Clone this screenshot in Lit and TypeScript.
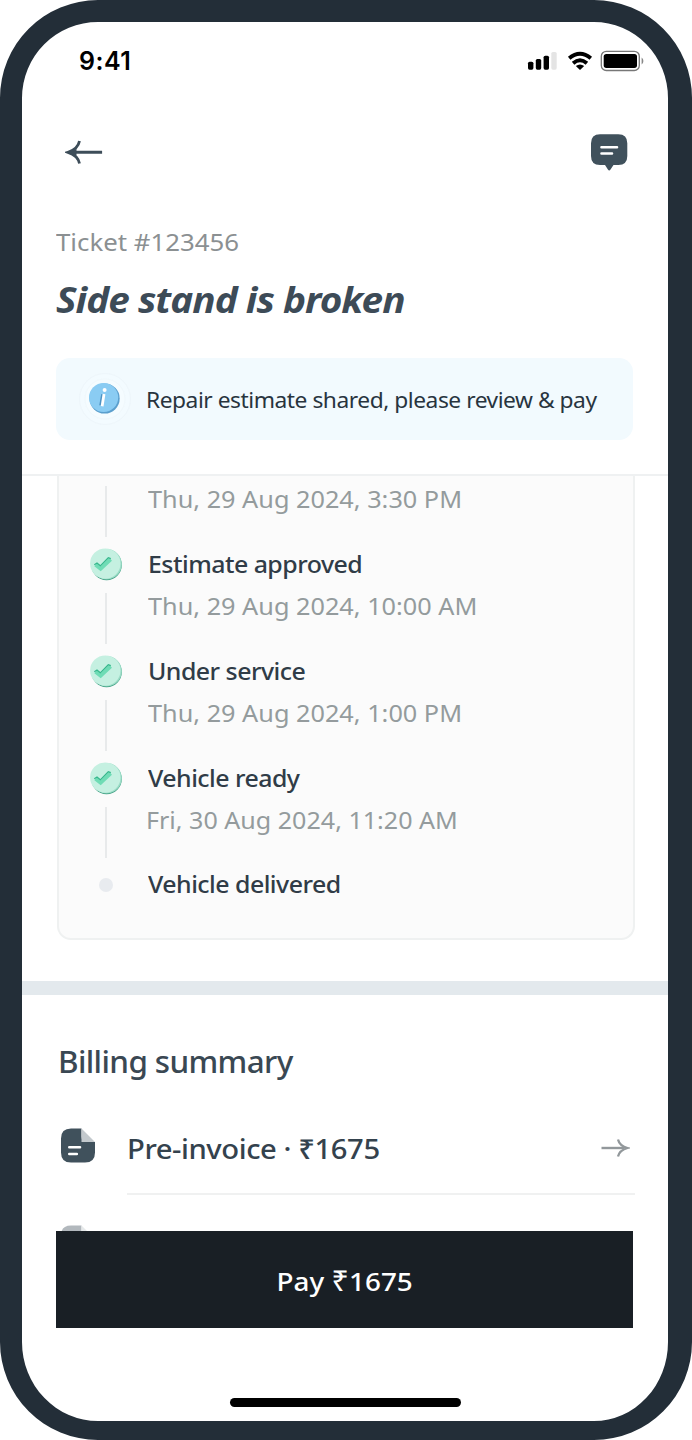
import { LitElement, html, css, svg } from "lit";
import { customElement, property } from "lit/decorators.js";

@customElement("status-bar")
class StatusBar extends LitElement {
  static styles = css`
    :host { display: flex; height: 78px; padding: 0 23px 0 57px; align-items: center; justify-content: space-between; box-sizing: border-box; }
    .time { font: 600 25px/30px Inter, sans-serif; color: #000; letter-spacing: 0.5px; }
    svg { display: block; }
  `;
  render() {
    return html`
      <span class="time">9:41</span>
      <svg width="118" height="24" viewBox="527 49 118 24">
        <rect x="528" y="61.7" width="5.4" height="8" rx="1.6" />
        <rect x="535.8" y="59" width="5.4" height="10.7" rx="1.6" />
        <rect x="543.6" y="55.7" width="5.4" height="14" rx="1.6" />
        <rect x="551.3" y="52" width="5.4" height="17.7" rx="1.6" fill="#e4e4e4" />
        <g fill="none" stroke="#000" stroke-width="3.9">
          <path d="M569.2 58.2 Q580 49.4 590.8 58.2" />
          <path d="M573.1 63.2 Q580 57.2 586.9 63.2" />
        </g>
        <path d="M575.8 66.1 Q580 62.9 584.2 66.1 L580 70 Z" />
        <rect x="601.3" y="51.3" width="38" height="19.2" rx="5" fill="none" stroke="#777" stroke-width="1.3" />
        <rect x="603.7" y="53.9" width="33.3" height="14" rx="2.6" />
        <path d="M641.6 57.6 Q643.4 58.8 643.4 61 Q643.4 63.2 641.6 64.4Z" fill="#888" />
      </svg>
    `;
  }
}

const check = svg`
  <circle cx="16.6" cy="17" r="15.2" fill="#35987b" />
  <circle cx="16.6" cy="16.3" r="15.2" fill="#9adcc6" />
  <circle cx="15.3" cy="15.6" r="15.2" fill="#c5f0e1" />
  <path d="M5.6 16.6 L10.6 20.6 L20.6 11.2" fill="none" stroke="#6fdcb5" stroke-width="4" />
  <path d="M4.3 16.8 L7 15 L10.3 17.8 L18.3 9.8 L20.8 10.6" fill="none" stroke="#35b78c" stroke-width="1.2" />`;

@customElement("timeline-step")
class TimelineStep extends LitElement {
  @property() label = "";
  @property() date = "";
  @property() kind = "done";
  static styles = css`
    :host { display: grid; grid-template-columns: 32px 1fr; column-gap: 26px; height: 106.8px; color: #303c47; }
    :host([kind="partial"]) { height: 72px; }
    :host([kind="pending"]) { height: 66px; }
    .rail { display: flex; flex-direction: column; align-items: center; gap: 12px; }
    .partial { padding-top: 10px; }
    .icon { display: block; }
    .line { width: 2px; height: 51px; background: #e8eaeb; }
    .dot { width: 14px; height: 14px; border-radius: 50%; background: #e8ebef; margin-top: 10px; }
    .text { display: flex; flex-direction: column; align-items: flex-start; white-space: nowrap; }
    .label, .date { transform-origin: left center; }
    .label { font-weight: 500; font-size: 24px; line-height: 32px; letter-spacing: -0.5px; transform: scaleX(1.037); }
    .date { font-size: 24px; line-height: 30px; margin-top: 11px; color: #949b9d; transform: scaleX(1.053); }
    .friday { margin-left: -2px; transform: scaleX(1.045); }
    .only { margin-top: 8px; }
  `;
  render() {
    const shift = this.date.startsWith("Fri") ? "friday" : "";
    return html`
      <div class="rail ${this.kind}">
        ${this.kind === "done" ? html`<svg class="icon" width="33" height="33" viewBox="0 0 33 33">${check}</svg>` : ""}
        ${this.kind === "pending" ? html`<div class="dot"></div>` : html`<div class="line"></div>`}
      </div>
      <div class="text">
        ${this.label ? html`<span class="label">${this.label}</span>` : ""}
        ${this.date ? html`<span class="date ${shift} ${this.label ? "" : "only"}">${this.date}</span>` : ""}
      </div>
    `;
  }
}

const docIcon = html`<svg width="36" height="36" viewBox="0 0 36 36">
  <path d="M11 .5H21.5V8.5Q21.5 14 27 14H35V24.5Q35 34.5 25 34.5H11Q1 34.5 1 24.5V10.5Q1 .5 11 .5Z" fill="#40515c" />
  <path d="M21.5 .5L35 14H21.5Z" fill="#c3c9cd" />
  <path d="M9.3 19.2H20M9.3 26H16.8" stroke="#fff" stroke-width="2.6" stroke-linecap="round" />
</svg>`;

@customElement("app-root")
class AppRoot extends LitElement {
  static styles = css`
    :host { display: block; width: 692px; height: 1440px; background: #fff; font-family: "Noto Sans", "Open Sans", sans-serif; }
    svg { display: block; }
    .phone { box-sizing: border-box; width: 692px; height: 1440px; border: solid #232e38; border-width: 22px 24px 19px 22px; border-radius: 98px; overflow: hidden; display: flex; flex-direction: column; background: #fff; }
    .header { box-sizing: border-box; height: 454px; border-bottom: 2px solid #eff1f2; display: flex; flex-direction: column; }
    .nav { display: flex; justify-content: space-between; align-items: center; height: 40px; margin-top: 32px; padding: 0 40px 0 43px; }
    .ticket, .title, .msg, .billing, .row span { transform-origin: left center; white-space: nowrap; }
    .ticket { margin: 54px 0 0 34px; font-size: 24px; line-height: 32px; color: #8b9092; transform: scaleX(1.075); }
    .title { margin: 18px 0 0 34px; font-size: 36px; line-height: 48px; font-weight: 700; font-style: italic; color: #3d4b57; letter-spacing: -0.9px; transform: scaleX(1.076); }
    .notice { margin: 34px 35px 0 34px; height: 82px; border-radius: 14px; background: #f2fafe; display: flex; align-items: center; padding-left: 22px; gap: 14px; font-size: 22px; color: #28343e; }
    .msg { letter-spacing: -0.45px; transform: scaleX(1.035); }
    .scroll { height: 755px; overflow: hidden; flex: none; }
    .card { box-sizing: border-box; margin: 0 33px 0 35px; height: 464px; border: 2px solid #eff1f1; border-top: 0; border-radius: 0 0 14px 14px; background: #fbfbfb; padding: 0 31px; }
    .band { height: 14px; margin-top: 41px; background: #e3e9ed; }
    .billing { margin: 47px 0 0 36px; font-size: 30px; line-height: 40px; font-weight: 500; color: #3a4853; letter-spacing: -0.6px; transform: scaleX(1.047); }
    .row { display: flex; align-items: center; justify-content: space-between; height: 36px; margin: 46px 38px 0 38px; }
    .item { display: flex; align-items: center; gap: 31px; }
    .row span { font-size: 27px; line-height: 36px; padding-top: 5px; font-weight: 500; color: #34424d; letter-spacing: -0.4px; transform: scaleX(1.082); }
    .go { padding-top: 4px; }
    .rule { height: 2px; background: #f0f1f1; margin: 29px 33px 0 105px; }
    .faded { opacity: 0.4; margin: 30px 0 0 38px; }
    .pay { flex: none; height: 97px; margin: 0 35px 0 34px; background: #191f25; color: #fff; display: flex; align-items: center; justify-content: center; font-size: 26px; font-weight: 500; }
    .amount { transform: scaleX(1.07); padding-top: 2px; }
    .rupee { font-size: 29px; font-weight: 400; line-height: 1; }
    .home { width: 231px; height: 9px; border-radius: 5px; background: #000; margin: 70px 0 0 208px; }
  `;
  render() {
    return html`
      <div class="phone">
        <div class="header">
          <status-bar></status-bar>
          <div class="nav">
            <svg width="38" height="26" viewBox="64.5 139 38 26">
              <path d="M73 152.3H101.6" stroke="#3d4d59" stroke-width="3" />
              <path d="M79 141Q77.5 149 67.5 152.3Q77.5 155.5 79 163.5" fill="none" stroke="#3d4d59" stroke-width="2.8" />
              <path d="M67 152.3L76 148.9V155.7Z" fill="#3d4d59" />
            </svg>
            <svg width="38" height="38" viewBox="590 133 38 38">
              <path d="M600 134.3H618.3Q627.3 134.3 627.3 143.3V156Q627.3 165 618.3 165H613.5L610.5 169.5Q609.2 171.3 607.9 169.5L605 165H600Q591 165 591 156V143.3Q591 134.3 600 134.3Z" fill="#40515c" />
              <path d="M601.5 147.2H617M601.5 153.5H612" stroke="#fff" stroke-width="2.6" stroke-linecap="round" />
            </svg>
          </div>
          <div class="ticket">Ticket #123456</div>
          <div class="title">Side stand is broken</div>
          <div class="notice">
            <svg width="54" height="54" viewBox="0 0 54 54">
              <circle cx="27" cy="27" r="25.5" fill="#f3fbff" stroke="#eef6fb" />
              <circle cx="27" cy="27" r="20" fill="#f5fcff" stroke="#f0f8fc" />
              <circle cx="26.6" cy="26.5" r="15.1" fill="#5b9fcd" />
              <circle cx="25.6" cy="25.5" r="14.6" fill="#8accf3" />
              <path d="M24.7 22.2L22.7 33.6" stroke="#4c92c3" stroke-width="3" />
              <path d="M26 22L24.1 34.2" stroke="#fff" stroke-width="2.8" />
              <circle cx="26.6" cy="18" r="2" fill="#fff" />
            </svg>
            <span class="msg">Repair estimate shared, please review &amp; pay</span>
          </div>
        </div>
        <div class="scroll">
          <div class="card">
            <timeline-step kind="partial" date="Thu, 29 Aug 2024, 3:30 PM"></timeline-step>
            <timeline-step kind="done" label="Estimate approved" date="Thu, 29 Aug 2024, 10:00 AM"></timeline-step>
            <timeline-step kind="done" label="Under service" date="Thu, 29 Aug 2024, 1:00 PM"></timeline-step>
            <timeline-step kind="done" label="Vehicle ready" date="Fri, 30 Aug 2024, 11:20 AM"></timeline-step>
            <timeline-step kind="pending" label="Vehicle delivered"></timeline-step>
          </div>
          <div class="band"></div>
          <div class="billing">Billing summary</div>
          <div class="row">
            <div class="item">${docIcon}<span>Pre-invoice · ₹1675</span></div>
            <svg class="go" width="30" height="20" viewBox="0 0 30 20">
              <path d="M1.5 10H24" stroke="#92989b" stroke-width="2.4" />
              <path d="M18 1.5Q19.5 7.8 27.5 10Q19.5 12.2 18 18.5" fill="none" stroke="#92989b" stroke-width="2.3" />
            </svg>
          </div>
          <div class="rule"></div>
          <div class="faded">${docIcon}</div>
        </div>
        <div class="pay"><span class="amount">Pay <span class="rupee">₹</span>1675</span></div>
        <div class="home"></div>
      </div>
    `;
  }
}
